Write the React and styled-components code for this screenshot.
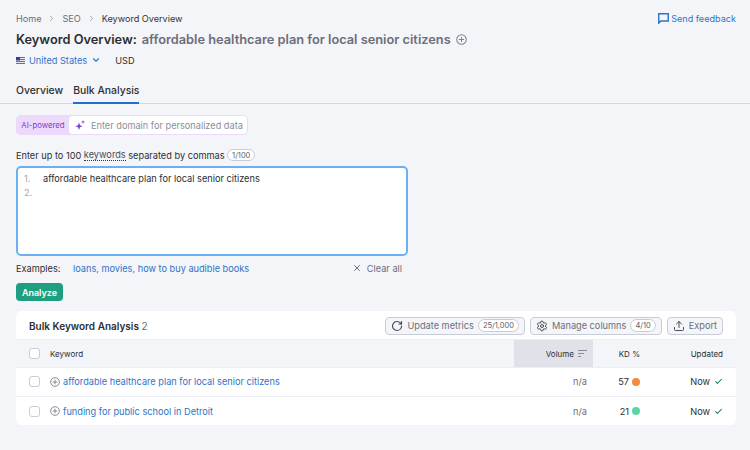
import React from "react";
import styled, { createGlobalStyle } from "styled-components";
import { ChevronDown, ChevronRight, X, RotateCw, Settings, Upload, Check } from "lucide-react";

const GlobalStyle = createGlobalStyle`
    html, body {
        margin: 0;
        padding: 0;
        background: #f4f5f9;
        font-family: Inter, "Liberation Sans", sans-serif;
        color: #2b2e33;
    }
`;

const Page = styled.div`
    width: 750px;
    height: 450px;
    overflow: hidden;
    box-sizing: border-box;
    padding-top: 11px;
`;

const TopRow = styled.div`
    display: flex;
    justify-content: space-between;
    align-items: center;
    height: 14px;
    padding: 0 14px 0 16px;
`;

const Breadcrumbs = styled.div`
    display: flex;
    align-items: center;
    font-size: 9.1px;
    color: #6c6e79;
`;

const Crumb = styled.span`
    color: ${(p) => (p.$current ? "#333" : "#6c6e79")};
`;

const CrumbSep = styled.span`
    display: flex;
    width: 21px;
    justify-content: center;
    color: #8b8e99;
`;

const Feedback = styled.div`
    display: flex;
    align-items: center;
    gap: 2px;
    font-size: 9.1px;
    color: #2f73c9;
`;

const TitleRow = styled.div`
    display: flex;
    align-items: center;
    height: 20px;
    margin: 4px 0 0 16px;
    font-size: 12.8px;
    font-weight: 600;
    white-space: nowrap;
`;

const TitleKeyword = styled.span`
    margin: 0 5px;
    color: #6c6e79;
`;

const LocaleRow = styled.div`
    display: flex;
    align-items: center;
    height: 14px;
    margin: 4px 0 0 16px;
    font-size: 9.2px;
`;

const Country = styled.span`
    display: flex;
    align-items: center;
    gap: 4px;
    color: #2f73c9;
    margin-right: 14px;
`;

const Tabs = styled.div`
    display: flex;
    gap: 10px;
    height: 27px;
    margin-top: 9px;
    padding-left: 16px;
    border-bottom: 1px solid #d5d7df;
`;

const Tab = styled.div`
    box-sizing: border-box;
    height: 28px;
    padding-top: 8px;
    font-size: 10.4px;
    font-weight: 500;
    color: #2b2e33;
    border-bottom: 2px solid ${(p) => (p.$active ? "#1f6fd0" : "transparent")};
`;

const AiField = styled.div`
    display: flex;
    align-items: center;
    box-sizing: border-box;
    width: 232px;
    height: 20px;
    margin: 11px 0 0 16px;
    background: #ecd9fb;
    border-radius: 5px;
    padding: 1px;
`;

const AiLabel = styled.span`
    width: 52px;
    text-align: center;
    font-size: 7.8px;
    color: #7b3fd0;
`;

const AiInput = styled.div`
    flex: 1;
    display: flex;
    align-items: center;
    gap: 6px;
    height: 100%;
    padding-left: 6px;
    background: #fff;
    border-radius: 4px;
    font-size: 9.2px;
    color: #8b8e99;
`;

const EntryLabel = styled.div`
    display: flex;
    align-items: center;
    height: 14px;
    margin: 13px 0 0 16px;
    font-size: 9.2px;
    white-space: pre;
`;

const Dotted = styled.span`
    color: #4a4d55;
    border-bottom: 1px dotted #333;
    line-height: 10px;
`;

const Pill = styled.span`
    display: inline-flex;
    align-items: center;
    box-sizing: border-box;
    height: ${(p) => (p.$small ? 12 : 13)}px;
    padding: 0 4px;
    border: 1px solid #c9ccd6;
    border-radius: 7px;
    background: #fff;
    font-size: 7.5px;
    font-weight: 400;
    color: #5d6068;
`;

const Editor = styled.div`
    box-sizing: border-box;
    width: 392px;
    height: 90px;
    margin: 4px 0 0 16px;
    padding: 4px 6px;
    background: #fff;
    border: 2px solid #6bb0f2;
    border-radius: 5px;
    font-size: 9.2px;
`;

const EditorLine = styled.div`
    display: flex;
    height: 13.5px;
    align-items: center;
`;

const LineNo = styled.span`
    width: 19px;
    color: #a5a8b2;
`;

const ExamplesRow = styled.div`
    display: flex;
    align-items: center;
    width: 386px;
    height: 14px;
    margin: 5px 0 0 16px;
    font-size: 9.2px;
`;

const ExamplesLabel = styled.span`
    width: 57px;
`;

const ExampleLinks = styled.span`
    flex: 1;
    color: #2f73c9;
`;

const ClearAll = styled.span`
    display: flex;
    align-items: center;
    gap: 5px;
    color: #6c6e79;
`;

const Analyze = styled.button`
    display: block;
    width: 47px;
    height: 18px;
    margin: 8px 0 0 16px;
    padding: 0;
    border: 0;
    border-radius: 4px;
    background: #1f9f82;
    color: #fff;
    font: 600 9px Inter, sans-serif;
`;

const Card = styled.div`
    width: 720px;
    margin: 10px 0 0 16px;
    background: #fff;
    border-radius: 5px;
    overflow: hidden;
`;

const CardHeader = styled.div`
    display: flex;
    align-items: center;
    height: 29px;
    padding: 0 13px;
`;

const CardTitle = styled.div`
    flex: 1;
    font-size: 10px;
    font-weight: 600;
`;

const Count = styled.span`
    font-weight: 400;
    color: #6c6e79;
`;

const ToolButton = styled.div`
    display: flex;
    align-items: center;
    box-sizing: border-box;
    height: 18px;
    margin-left: 5px;
    padding: 0 5px;
    gap: 4px;
    background: #f4f5f9;
    border: 1px solid #c9ccd6;
    border-radius: 4px;
    font-size: 9.2px;
    color: #6c6e79;
`;

const Columns = styled.div`
    display: grid;
    grid-template-columns: 34px 464px 79px 65px 1fr;
    align-items: center;
    height: ${(p) => p.$height}px;
    margin-top: ${(p) => p.$gap || 0}px;
    font-size: ${(p) => (p.$head ? 8 : 9.2)}px;
    background: ${(p) => (p.$head ? "#f4f5f9" : "#fff")};
    box-shadow: 0 -1px 0 #eceef3;
`;

const Box = styled.span`
    box-sizing: border-box;
    display: block;
    width: 11px;
    height: 11px;
    margin-left: 13px;
    background: #fff;
    border: 1px solid #c9ccd6;
    border-radius: 3px;
`;

const KeywordCell = styled.div`
    display: flex;
    align-items: center;
    gap: 3px;
    color: #2f73c9;
`;

const VolumeHead = styled.div`
    display: flex;
    align-items: center;
    justify-content: flex-end;
    gap: 4px;
    height: 100%;
    padding-right: 6px;
    background: #e0e2ea;
`;

const VolumeCell = styled.div`
    text-align: right;
    padding-right: 6px;
    color: #6c6e79;
`;

const KdCell = styled.div`
    display: flex;
    align-items: center;
    justify-content: flex-end;
    gap: 3px;
    padding-right: 18px;
`;

const Dot = styled.span`
    width: 8px;
    height: 8px;
    border-radius: 50%;
    background: ${(p) => p.$color};
`;

const UpdatedCell = styled.div`
    display: flex;
    align-items: center;
    justify-content: flex-end;
    gap: 4px;
    padding-right: 13px;
`;

const PlusCircle = ({ size = 10, color = "#7f828d" }) => (
    <svg width={size} height={size} viewBox="0 0 12 12" fill="none" stroke={color} strokeWidth="1.1">
        <circle cx="6" cy="6" r="5.2" />
        <path d="M6 3.2v5.6M3.2 6h5.6" />
    </svg>
);

const rows = [
    { keyword: "affordable healthcare plan for local senior citizens", kd: 57, color: "#f58a42", height: 27, gap: 1 },
    { keyword: "funding for public school in Detroit", kd: 21, color: "#5cd6a0", height: 28, gap: 2 },
];

const App = () => {
    return (
        <Page>
            <GlobalStyle />
            <TopRow>
                <Breadcrumbs>
                    <Crumb>Home</Crumb>
                    <CrumbSep><ChevronRight size={9} /></CrumbSep>
                    <Crumb>SEO</Crumb>
                    <CrumbSep><ChevronRight size={9} /></CrumbSep>
                    <Crumb $current>Keyword Overview</Crumb>
                </Breadcrumbs>
                <Feedback>
                    <svg width="11" height="11" viewBox="0 0 10 10" fill="none" stroke="#2f73c9" strokeWidth="1.3">
                        <path d="M.7.7h8.6v6.6H2.6L.7 9.2z" />
                    </svg>
                    Send feedback
                </Feedback>
            </TopRow>
            <TitleRow>
                Keyword Overview:
                <TitleKeyword>affordable healthcare plan for local senior citizens</TitleKeyword>
                <PlusCircle size={11} />
            </TitleRow>
            <LocaleRow>
                <Country>
                    <svg width="9" height="7" viewBox="0 0 9 7">
                        <rect width="9" height="7" fill="#e8e8f0" />
                        <path d="M0 .5h9M0 2.5h9M0 4.5h9M0 6.5h9" stroke="#d8455a" />
                        <rect width="4" height="3.5" fill="#3c3f8f" />
                    </svg>
                    United States
                    <ChevronDown size={10} strokeWidth={2.6} />
                </Country>
                USD
            </LocaleRow>
            <Tabs>
                <Tab>Overview</Tab>
                <Tab $active>Bulk Analysis</Tab>
            </Tabs>
            <AiField>
                <AiLabel>AI-powered</AiLabel>
                <AiInput>
                    <svg width="10" height="10" viewBox="0 0 10 10" fill="#7b3fd0">
                        <path d="M4 2.5 5 5.2l2.6 1L5 7.2 4 10 3 7.2.4 6.2 3 5.2z" />
                        <path d="M8 0l.5 1.4L10 2l-1.5.5L8 4l-.5-1.5L6 2l1.5-.6z" />
                    </svg>
                    Enter domain for personalized data
                </AiInput>
            </AiField>
            <EntryLabel>
                Enter up to 100 <Dotted>keywords</Dotted> separated by commas <Pill $small>1/100</Pill>
            </EntryLabel>
            <Editor>
                <EditorLine><LineNo>1.</LineNo>affordable healthcare plan for local senior citizens</EditorLine>
                <EditorLine><LineNo>2.</LineNo></EditorLine>
            </Editor>
            <ExamplesRow>
                <ExamplesLabel>Examples:</ExamplesLabel>
                <ExampleLinks>loans, movies, how to buy audible books</ExampleLinks>
                <ClearAll><X size={10} strokeWidth={2.4} />Clear all</ClearAll>
            </ExamplesRow>
            <Analyze>Analyze</Analyze>
            <Card>
                <CardHeader>
                    <CardTitle>Bulk Keyword Analysis <Count>2</Count></CardTitle>
                    <ToolButton><RotateCw size={12} color="#4a4d55" strokeWidth={2.4} />Update metrics<Pill>25/1,000</Pill></ToolButton>
                    <ToolButton><Settings size={12} color="#4a4d55" />Manage columns<Pill>4/10</Pill></ToolButton>
                    <ToolButton><Upload size={12} color="#4a4d55" />Export</ToolButton>
                </CardHeader>
                <Columns $head $height={27}>
                    <Box />
                    <span>Keyword</span>
                    <VolumeHead>
                        Volume
                        <svg width="9" height="7" viewBox="0 0 9 7" stroke="#8b8e99">
                            <path d="M0 .5h9M0 3.5h6M0 6.5h3" />
                        </svg>
                    </VolumeHead>
                    <KdCell>KD %</KdCell>
                    <UpdatedCell>Updated</UpdatedCell>
                </Columns>
                {rows.map((row) => (
                    <Columns key={row.keyword} $height={row.height} $gap={row.gap}>
                        <Box />
                        <KeywordCell><PlusCircle />{row.keyword}</KeywordCell>
                        <VolumeCell>n/a</VolumeCell>
                        <KdCell>{row.kd}<Dot $color={row.color} /></KdCell>
                        <UpdatedCell>Now <Check size={9} color="#15805f" strokeWidth={2.8} /></UpdatedCell>
                    </Columns>
                ))}
            </Card>
        </Page>
    );
};

export default App;
